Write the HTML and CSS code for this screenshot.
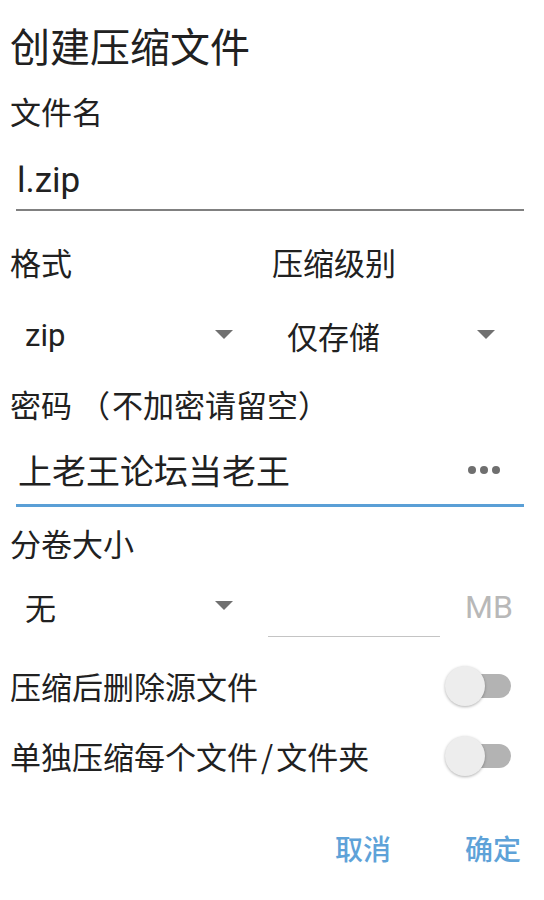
FILE: index.html
```html
<!DOCTYPE html>
<html lang="zh-CN">
<head>
<meta charset="utf-8">
<title>创建压缩文件</title>
<link rel="stylesheet" href="styles.css">
</head>
<body>
<div class="dialog">
  <div class="title">创建压缩文件</div>

  <div class="label label-first">文件名</div>
  <div class="field field-name">l.zip</div>

  <div class="grid labels-row">
    <div class="label">格式</div>
    <div class="label">压缩级别</div>
  </div>

  <div class="grid select-row">
    <div class="select select-left">
      <span class="select-text latin">zip</span>
      <span class="arrow"></span>
    </div>
    <div class="select">
      <span class="select-text">仅存储</span>
      <span class="arrow"></span>
    </div>
  </div>

  <div class="label pw-label">密码<span class="paren-open">（</span>不加密请留空）</div>
  <div class="field field-pw">
    <span class="pw-text">上老王论坛当老王</span>
    <span class="dots"><i></i><i></i><i></i></span>
  </div>

  <div class="label split-label">分卷大小</div>
  <div class="grid split-row">
    <div class="select select-left">
      <span class="select-text">无</span>
      <span class="arrow"></span>
    </div>
    <div class="size">
      <span class="size-input"></span>
      <span class="unit">MB</span>
    </div>
  </div>

  <div class="switch-row first-switch">
    <span class="switch-label">压缩后删除源文件</span>
    <span class="switch"><span class="track"></span><span class="thumb"></span></span>
  </div>
  <div class="switch-row">
    <span class="switch-label">单独压缩每个文件<span class="slash">/</span>文件夹</span>
    <span class="switch"><span class="track"></span><span class="thumb"></span></span>
  </div>

  <div class="actions">
    <span class="btn">取消</span>
    <span class="btn">确定</span>
  </div>
</div>
</body>
</html>
```

FILE: styles.css
```css
html, body {
  margin: 0;
  padding: 0;
  background: #ffffff;
}

body {
  font-family: "Noto Sans CJK SC", "Noto Sans", sans-serif;
  color: #212121;
}

.dialog {
  width: 544px;
  height: 900px;
  box-sizing: border-box;
  padding: 0 20px 0 10px;
}

.title {
  height: 90px;
  display: flex;
  align-items: center;
  font-size: 40px;
  line-height: 40px;
}

.label {
  font-size: 31px;
  line-height: 40px;
  height: 40px;
  white-space: nowrap;
}

.paren-open {
  margin: 0 2px 0 7px;
}

.label-first {
  margin-top: 1px;
}

.field {
  margin-left: 6px;
  box-sizing: border-box;
}

.field-name {
  font-family: "Roboto", "Noto Sans CJK SC", sans-serif;
  font-size: 35px;
  line-height: 40px;
  padding: 30px 0 8px 1px;
  border-bottom: 2px solid #808080;
}

.grid {
  display: grid;
  grid-template-columns: 262px 1fr;
}

.labels-row {
  margin-top: 31px;
}

.select-row {
  margin-top: 34px;
}

.select {
  height: 40px;
  display: flex;
  align-items: center;
  justify-content: space-between;
  padding: 0 29px 0 15px;
}

.select-left {
  padding-right: 39px;
}

.select-text {
  font-size: 31px;
  line-height: 40px;
}

.latin {
  font-family: "Roboto", "Noto Sans CJK SC", sans-serif;
}

.arrow {
  width: 0;
  height: 0;
  border-left: 9px solid transparent;
  border-right: 9px solid transparent;
  border-top: 9px solid #707070;
  margin-top: -4px;
}

.pw-label {
  margin-top: 28px;
}

.field-pw {
  display: flex;
  align-items: center;
  justify-content: space-between;
  padding: 26px 24px 14px 2px;
  border-bottom: 3px solid #5a9fd6;
}

.pw-text {
  font-size: 34px;
  line-height: 40px;
}

.dots {
  display: flex;
  gap: 4px;
}

.dots i {
  width: 8px;
  height: 8px;
  border-radius: 50%;
  background: #6f6f6f;
}

.split-label {
  margin-top: 16px;
}

.split-row {
  margin-top: 24px;
}

.size {
  display: flex;
  align-items: flex-start;
  margin-left: -4px;
}

.size-input {
  width: 172px;
  height: 49px;
  border-bottom: 1.5px solid #c4c4c4;
}

.unit {
  font-family: "Roboto", sans-serif;
  font-size: 32px;
  line-height: 40px;
  color: #b8b8b8;
  margin-left: 25px;
}

.switch-row {
  height: 70px;
  display: flex;
  align-items: center;
  justify-content: space-between;
}

.first-switch {
  margin-top: 14px;
}

.switch-label {
  font-size: 31px;
  line-height: 40px;
  white-space: nowrap;
}

.slash {
  margin: 0 3px;
}

.switch {
  position: relative;
  width: 66px;
  height: 40px;
  margin-right: 13px;
}

.track {
  position: absolute;
  left: 4px;
  right: 0;
  top: 8px;
  height: 24px;
  border-radius: 12px;
  background: #b3b3b3;
}

.thumb {
  position: absolute;
  left: 0;
  top: 0;
  width: 40px;
  height: 40px;
  border-radius: 50%;
  background: #ededed;
  box-shadow: 0 1px 3px rgba(0, 0, 0, 0.3);
}

.actions {
  display: flex;
  justify-content: flex-end;
  gap: 74px;
  padding-top: 37px;
  margin-right: 3px;
}

.btn {
  font-size: 28px;
  line-height: 40px;
  font-weight: 500;
  color: #5ea2d8;
}
```
